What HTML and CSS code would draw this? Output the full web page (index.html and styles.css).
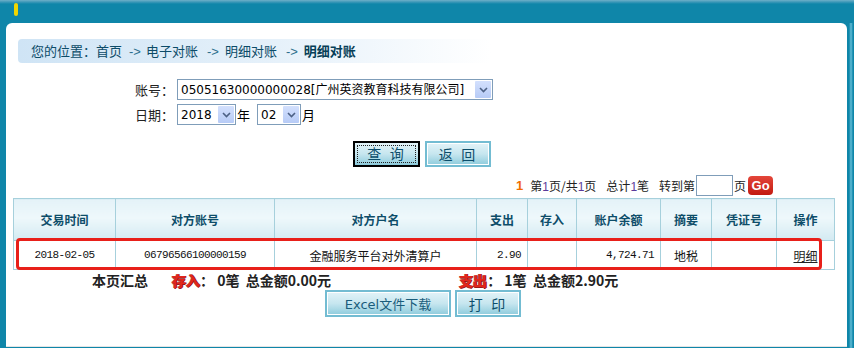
FILE: index.html
```html
<!DOCTYPE html>
<html>
<head>
  <meta charset="utf-8">
  <title>明细对账</title>
  <link rel="stylesheet" href="styles.css">
</head>
<body>
  <div class="topbar"><span class="marker"></span></div>
  <div class="panel">
    <div class="crumb">您的位置：首页<span class="arrow">-&gt;</span>电子对账<span class="arrow wide">-&gt;</span>明细对账<span class="arrow wide">-&gt;</span><b>明细对账</b></div>

    <form class="query">
      <div class="form-row">
        <label>账号：</label>
        <span class="select account">
          <select><option>05051630000000028[广州英资教育科技有限公司]</option></select>
          <span class="drop"><svg width="9" height="6" viewBox="0 0 9 6"><path d="M1 1 L4.5 4.5 L8 1" fill="none" stroke="#4d6185" stroke-width="1.6"/></svg></span>
        </span>
      </div>
      <div class="form-row">
        <label>日期：</label>
        <span class="select year">
          <select><option>2018</option></select>
          <span class="drop"><svg width="9" height="6" viewBox="0 0 9 6"><path d="M1 1 L4.5 4.5 L8 1" fill="none" stroke="#4d6185" stroke-width="1.6"/></svg></span>
        </span>
        <span class="unit">年</span>
        <span class="select month">
          <select><option>02</option></select>
          <span class="drop"><svg width="9" height="6" viewBox="0 0 9 6"><path d="M1 1 L4.5 4.5 L8 1" fill="none" stroke="#4d6185" stroke-width="1.6"/></svg></span>
        </span>
        <span class="unit">月</span>
      </div>
      <div class="actions">
        <button type="button" class="btn focused"><span>查 询</span></button>
        <button type="button" class="btn">返 回</button>
      </div>
    </form>

    <div class="pager">
      <b class="cur">1</b><span class="seg">第<i>1</i>页/共<i>1</i>页</span><span class="seg">总计<i>1</i>笔</span><span class="seg">转到第</span><input type="text" class="goto">页<button type="button" class="go">Go</button>
    </div>

    <div class="grid-wrap">
      <table class="grid">
        <colgroup>
          <col style="width:102px"><col style="width:159px"><col style="width:202px">
          <col style="width:51px"><col style="width:49px"><col style="width:84px">
          <col style="width:51px"><col style="width:65px"><col style="width:58px">
        </colgroup>
        <thead>
          <tr>
            <th>交易时间</th><th>对方账号</th><th>对方户名</th><th>支出</th><th>存入</th>
            <th>账户余额</th><th>摘要</th><th>凭证号</th><th>操作</th>
          </tr>
        </thead>
        <tbody>
          <tr>
            <td class="mono">2018-02-05</td>
            <td class="mono">06796566100000159</td>
            <td>金融服务平台对外清算户</td>
            <td class="mono right">2.90</td>
            <td></td>
            <td class="mono right">4,724.71</td>
            <td>地税</td>
            <td></td>
            <td><a href="#">明细</a></td>
          </tr>
        </tbody>
      </table>
      <div class="highlight"></div>
    </div>

    <div class="summary">
      <b>本页汇总</b>
      <span class="tag first">存入</span><b>：&nbsp;0笔&nbsp; 总金额0.00元</b>
      <span class="tag second">支出</span><b>：&nbsp;1笔&nbsp; 总金额2.90元</b>
    </div>

    <div class="actions bottom">
      <button type="button" class="btn excel">Excel文件下载</button>
      <button type="button" class="btn">打 印</button>
    </div>
  </div>
</body>
</html>
```

FILE: styles.css
```css
body {
  margin: 0;
  height: 348px;
  overflow: hidden;
  font-family: "Liberation Sans", "Noto Sans CJK SC", sans-serif;
  font-size: 12px;
  color: #000;
  background: linear-gradient(to right, #0f86a9 0, #0f86a9 849px, #63bcd6 851px, #0f86a9 853px);
  display: flex;
  flex-direction: column;
}
.topbar {
  height: 23px;
  background: linear-gradient(#6fb0c9 0, #3d98b8 2px, #0f86a9 4px);
  position: relative;
}
.marker {
  position: absolute;
  left: 14px;
  top: 3px;
  width: 4px;
  height: 13px;
  border-radius: 2px;
  background: #f2d600;
}
.panel {
  flex: 1;
  margin: 0 7px 1px 6px;
  background: #fff;
  border-radius: 6px 6px 0 0;
  border-bottom: 1px solid #e4e4e4;
}
.crumb {
  margin: 16px 0 0 12px;
  width: 460px;
  height: 24px;
  line-height: 24px;
  padding-left: 13px;
  border-radius: 4px;
  background: linear-gradient(to right, #cfe4f5 0, #e6f1fa 55%, #fff 100%);
  font-family: "Noto Sans CJK SC", sans-serif;
  font-size: 13px;
  color: #0c4b68;
}
.crumb .arrow {
  font-family: "Liberation Sans", sans-serif;
  color: #2c6f8c;
  margin: 0 5px 0 7px;
}
.crumb .arrow.wide {
  margin-left: 9px;
  margin-right: 6px;
}
.crumb b {
  color: #073f58;
}
.query {
  margin: 16px 0 0;
}
.form-row {
  display: flex;
  align-items: center;
  height: 21px;
  padding-left: 129px;
  margin-bottom: 4px;
}
.form-row label {
  width: 42px;
  font-family: "Noto Sans CJK SC", sans-serif;
  font-size: 13px;
  color: #222;
}
.select {
  position: relative;
  display: inline-block;
  height: 21px;
}
.select select {
  appearance: none;
  -webkit-appearance: none;
  box-sizing: border-box;
  height: 21px;
  width: 100%;
  margin: 0;
  border: 1px solid #7f9db9;
  border-radius: 0;
  background: #fff;
  padding: 0 0 0 3px;
  font-family: "DejaVu Sans", "Noto Sans CJK SC", sans-serif;
  font-size: 12px;
  color: #000;
}
.drop {
  position: absolute;
  right: 2px;
  top: 2px;
  width: 16px;
  height: 17px;
  background: linear-gradient(#d3e0fd, #b7cbf6);
  border-radius: 1px;
  display: flex;
  align-items: center;
  justify-content: center;
  pointer-events: none;
}
.account { width: 316px; }
.year { width: 59px; }
.month { width: 44px; }
.unit {
  font-family: "Noto Sans CJK SC", sans-serif;
  font-size: 13px;
  margin: 0 7px 0 1px;
}
.actions {
  display: flex;
  gap: 5px;
  padding-left: 347px;
  margin-top: 16px;
}
.btn {
  box-sizing: border-box;
  width: 66px;
  height: 26px;
  border: 2px solid #73bcd2;
  box-shadow: inset 0 0 0 1px #fff;
  background: linear-gradient(#e2f3f8 0, #c6e6ef 50%, #8dcbdc 100%);
  font-family: "DejaVu Sans", "Noto Sans CJK SC", sans-serif;
  font-size: 14px;
  color: #0c4d6a;
  letter-spacing: 2px;
  padding: 0;
  cursor: pointer;
}
.btn.focused {
  width: 67px;
  border-color: #000;
  box-shadow: none;
  padding: 2px;
}
.btn.focused span {
  display: block;
  height: 100%;
  box-sizing: border-box;
  border: 1px dotted #222;
  line-height: 16px;
}
.pager {
  margin-top: 8px;
  padding-left: 510px;
  height: 21px;
  display: flex;
  align-items: center;
  font-family: "Noto Sans CJK SC", sans-serif;
  font-size: 12px;
  color: #222;
  white-space: pre;
}
.pager .cur {
  color: #f26c00;
  font-family: "Liberation Sans", sans-serif;
  font-size: 13px;
}
.pager .seg {
  margin-left: 7px;
}
.pager .seg + .seg {
  margin-left: 10px;
}
.pager i {
  font-style: normal;
  color: #5b3a9a;
  font-family: "Liberation Sans", sans-serif;
}
.goto {
  box-sizing: border-box;
  width: 37px;
  height: 21px;
  margin: 0 1px 0 1px;
  border: 1px solid #7f9db9;
  padding: 0;
}
.go {
  margin-left: 2px;
  width: 25px;
  height: 19px;
  border: 0;
  border-radius: 4px;
  background: linear-gradient(#e4463a, #c21a10);
  color: #fff;
  font-family: "Liberation Sans", sans-serif;
  font-weight: bold;
  font-size: 13px;
  padding: 0;
}
.grid-wrap {
  position: relative;
  margin: 2px 0 0 7px;
  width: 821px;
}
.grid {
  width: 821px;
  table-layout: fixed;
  border-collapse: collapse;
}
.grid th,
.grid td {
  border: 1px solid #a6d0dc;
  text-align: center;
  padding: 0;
}
.grid th {
  height: 41px;
  background: linear-gradient(#e4f2f8 0, #eef8fb 45%, #d3eaf2 100%);
  font-family: "Noto Sans CJK SC", sans-serif;
  font-size: 12px;
  font-weight: bold;
  color: #0d4d69;
}
.grid td {
  height: 28px;
  font-family: "Noto Sans CJK SC", sans-serif;
  font-size: 12px;
  color: #111;
}
.grid td.mono {
  font-family: "Liberation Mono", monospace;
  font-size: 11px;
  letter-spacing: -0.6px;
}
.grid td.right {
  text-align: right;
  padding-right: 6px;
}
.grid td a {
  color: #222;
  text-decoration: underline;
}
.highlight {
  position: absolute;
  left: 3px;
  top: 40px;
  width: 800px;
  height: 26px;
  border: 3px solid #e8201a;
  border-radius: 4px;
}
.summary {
  display: flex;
  align-items: center;
  height: 15px;
  padding: 2px 0 0 86px;
  font-family: "Noto Sans CJK SC", sans-serif;
  font-size: 14px;
  color: #222;
  white-space: pre;
}
.summary b {
  font-weight: bold;
}
.tag {
  font-weight: bold;
  color: #e3261c;
  text-shadow: 1px 0 #8a1010, -1px 0 #c73a3a, 0 1px #9a1a1a;
}
.tag.first { margin-left: 24px; }
.tag.second { margin-left: 128px; }
.actions.bottom {
  margin-top: 3px;
  padding-left: 319px;
  gap: 4px;
}
.btn.excel {
  width: 126px;
  height: 27px;
  font-size: 13px;
  letter-spacing: 0;
  color: #1a5d7c;
}
.actions.bottom .btn {
  height: 27px;
}
```
